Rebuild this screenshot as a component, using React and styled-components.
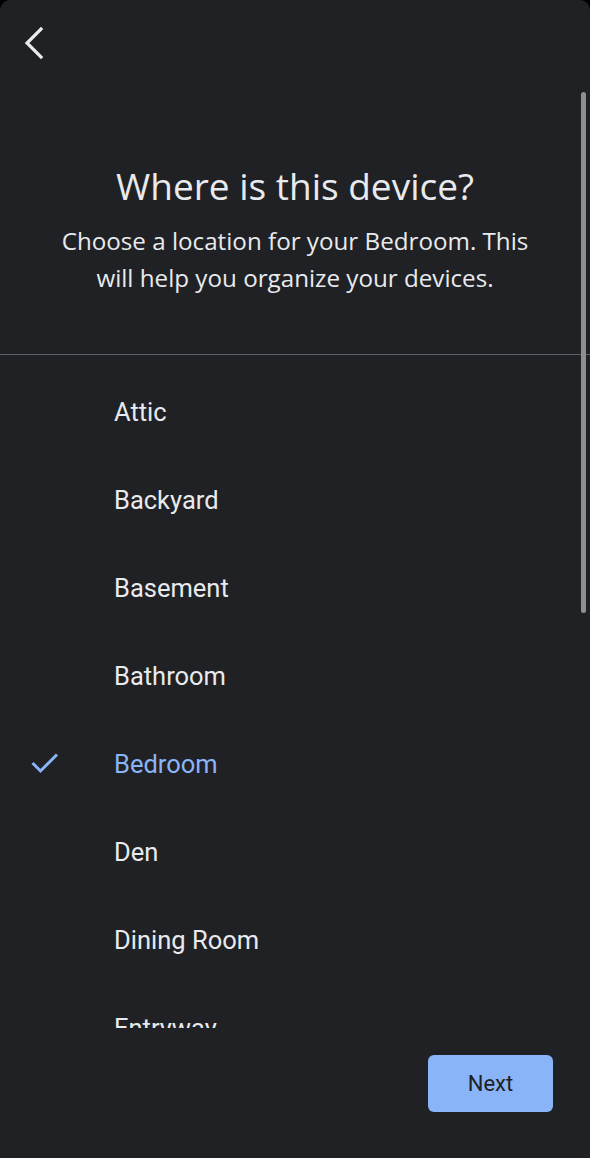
import React, { useState } from 'react'
import styled, { createGlobalStyle } from 'styled-components'

const GlobalStyle = createGlobalStyle`
  html, body {
    margin: 0;
    padding: 0;
    background: #000;
  }
  * { box-sizing: border-box; }
`

const Screen = styled.div`
  width: 590px;
  height: 1158px;
  background: #202124;
  border-radius: 10px 10px 0 0;
  display: flex;
  flex-direction: column;
  font-family: Roboto, 'Liberation Sans', sans-serif;
  color: #e8eaed;
  overflow: hidden;
`

const TopBar = styled.div`
  height: 86px;
  flex-shrink: 0;
  padding: 26px 0 0 20px;
`

const BackButton = styled.button`
  width: 28px;
  height: 34px;
  padding: 0;
  border: none;
  background: none;
  cursor: pointer;
  display: flex;
  align-items: center;
  justify-content: center;
`

const ScrollArea = styled.div`
  position: relative;
  flex: 1;
  overflow: hidden;
`

const ScrollThumb = styled.div`
  position: absolute;
  right: 4px;
  top: 6px;
  width: 5px;
  height: 521px;
  border-radius: 3px;
  background: #8e8f91;
`

const Header = styled.div`
  padding: 78px 50px 0;
  text-align: center;
  font-family: 'Open Sans', Roboto, sans-serif;
`

const Title = styled.h1`
  margin: 0;
  font-size: 37px;
  line-height: 44px;
  font-weight: 400;
  color: #e8eaed;
`

const Subtitle = styled.p`
  margin: 14px -10px 0;
  font-size: 24.2px;
  line-height: 37px;
  color: #e8eaed;
`

const Divider = styled.hr`
  margin: 58px 0 0;
  border: none;
  height: 1px;
  background: #5f6368;
`

const List = styled.ul`
  list-style: none;
  margin: 0;
  padding: 13px 0 0;
`

const Item = styled.li`
  height: 88px;
  display: grid;
  grid-template-columns: 114px 1fr;
  align-items: center;
  font-size: 25.5px;
  color: ${p => (p.$selected ? '#8ab4f8' : '#e8eaed')};
  cursor: pointer;
`

const CheckCell = styled.div`
  padding-left: 30px;
  display: flex;
  align-items: center;
`

const Footer = styled.div`
  height: 130px;
  flex-shrink: 0;
  display: flex;
  justify-content: flex-end;
  align-items: flex-start;
  padding: 27px 37px 0 0;
`

const NextButton = styled.button`
  width: 125px;
  height: 57px;
  border: none;
  border-radius: 6px;
  background: #8ab4f8;
  color: #202124;
  font-family: Roboto, 'Liberation Sans', sans-serif;
  font-size: 22px;
  font-weight: 400;
  cursor: pointer;
`

const rooms = ['Attic', 'Backyard', 'Basement', 'Bathroom', 'Bedroom', 'Den', 'Dining Room', 'Entryway', 'Family Room']

const App = () => {
  const [selected, setSelected] = useState('Bedroom')

  return (
    <>
      <GlobalStyle />
      <Screen>
        <TopBar>
          <BackButton aria-label="Back">
            <svg width="24" height="34" viewBox="0 0 24 34">
              <polyline points="19,3 5,17 19,31" fill="none" stroke="#e8eaed" strokeWidth="3.2" strokeLinecap="square" />
            </svg>
          </BackButton>
        </TopBar>

        <ScrollArea>
          <Header>
            <Title>Where is this device?</Title>
            <Subtitle>
              Choose a location for your Bedroom. This will help you organize your devices.
            </Subtitle>
          </Header>
          <Divider />
          <List>
            {rooms.map(room => (
              <Item key={room} $selected={room === selected} onClick={() => setSelected(room)}>
                <CheckCell>
                  {room === selected && (
                    <svg width="30" height="24" viewBox="0 0 30 24">
                      <polyline points="2.5,11 10.5,19 27,2.5" fill="none" stroke="#8ab4f8" strokeWidth="3" />
                    </svg>
                  )}
                </CheckCell>
                <span>{room}</span>
              </Item>
            ))}
          </List>
          <ScrollThumb />
        </ScrollArea>

        <Footer>
          <NextButton>Next</NextButton>
        </Footer>
      </Screen>
    </>
  )
}

export default App
